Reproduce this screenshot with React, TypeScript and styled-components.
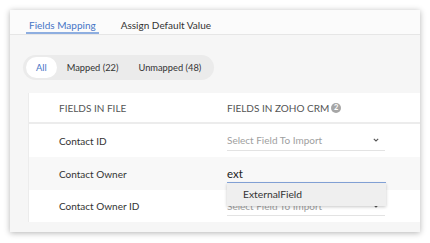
import React from "react";
import styled, { createGlobalStyle } from "styled-components";

const Global = createGlobalStyle`
  html, body { margin: 0; padding: 0; background: #ffffff; }
  body { font-family: Lato, "Open Sans", sans-serif; }
  * { box-sizing: border-box; }
`;

const Page = styled.div`
  width: 430px;
  height: 243px;
  padding: 10px;
  overflow: hidden;
`;

const Card = styled.div`
  width: 410px;
  height: 222px;
  background: #f6f6f6;
  box-shadow: 0 1px 6px rgba(0, 0, 0, 0.3);
  display: flex;
  flex-direction: column;
  overflow: hidden;
`;

const TabBar = styled.div`
  height: 25px;
  flex: none;
  background: #fbfbfb;
  border-bottom: 1px solid #e6e6e6;
  display: flex;
  align-items: stretch;
  padding-left: 16px;
  gap: 19px;
`;

const Tab = styled.div<{ $active?: boolean }>`
  font-size: 10px;
  line-height: 12px;
  color: ${(p) => (p.$active ? "#4675c6" : "#333333")};
  padding: 9px 3px 0 3px;
  border-bottom: 2px solid ${(p) => (p.$active ? "#8eaee0" : "transparent")};
`;

const Body = styled.div`
  flex: 1;
  display: flex;
  flex-direction: column;
  padding: 20px 0 0 13px;
`;

const FilterPill = styled.div`
  align-self: flex-start;
  height: 25px;
  border-radius: 13px;
  background: #ebebeb;
  display: flex;
  align-items: center;
  padding: 0 13px 0 3px;
`;

const FilterItem = styled.div<{ $active?: boolean; $gap?: number }>`
  font-size: 9.3px;
  height: 21px;
  display: flex;
  align-items: center;
  padding: 0 ${(p) => (p.$active ? "10px" : "0")};
  margin-left: ${(p) => p.$gap ?? 0}px;
  border-radius: 11px;
  background: ${(p) => (p.$active ? "#ffffff" : "transparent")};
  color: ${(p) => (p.$active ? "#4675c6" : "#333333")};
`;

const Panel = styled.div`
  margin-top: 13px;
  margin-left: 5px;
  background: #ffffff;
  border-left: 1px solid #ececec;
  display: flex;
  flex-direction: column;
`;

const HeaderRow = styled.div`
  display: grid;
  grid-template-columns: 198px 1fr;
  height: 31px;
  border-bottom: 2px solid #ececec;
  align-items: center;
`;

const HeadCell = styled.div<{ $first?: boolean }>`
  font-size: 10px;
  line-height: 12px;
  color: #555555;
  text-transform: uppercase;
  padding-left: ${(p) => (p.$first ? "30px" : "0")};
  display: flex;
  align-items: center;
  gap: 2px;
`;

const Badge = styled.span`
  width: 10px;
  height: 10px;
  border-radius: 50%;
  background: #a6a6a6;
  color: #ffffff;
  font-size: 7.5px;
  font-weight: 700;
  line-height: 10px;
  display: inline-flex;
  align-items: center;
  justify-content: center;
`;

const Row = styled.div<{ $shade?: boolean; $h?: number }>`
  display: grid;
  grid-template-columns: 198px 1fr;
  height: ${(p) => p.$h ?? 33}px;
  align-items: center;
  background: ${(p) => (p.$shade ? "#f8f8f8" : "#ffffff")};
  position: relative;
`;

const FieldName = styled.div`
  font-size: 10px;
  line-height: 12px;
  color: #333333;
  padding-left: 30px;
`;

const SelectBox = styled.div`
  width: 158px;
  height: 20px;
  border-bottom: 1px solid #e3e3e3;
  display: flex;
  align-items: center;
  justify-content: space-between;
  padding-right: 6px;
  font-size: 10px;
  color: #a0a0a0;
`;

const InputWrap = styled.div`
  position: relative;
  width: 159px;
`;

const InputBox = styled.div`
  height: 18px;
  border-bottom: 1px solid #86a6dc;
  display: flex;
  align-items: center;
  font-size: 11.5px;
  color: #222222;
`;

const Menu = styled.div`
  position: absolute;
  top: 18px;
  left: 0;
  width: 159px;
  height: 23px;
  background: #efefef;
  box-shadow: 0 1px 3px rgba(0, 0, 0, 0.22);
  display: flex;
  align-items: center;
  padding-left: 16px;
  font-size: 10.3px;
  color: #333333;
  z-index: 2;
`;

const Chevron = () => (
  <svg width="6" height="4" viewBox="0 0 6 4">
    <path d="M0.8 0.8 L3 3 L5.2 0.8" fill="none" stroke="#555" strokeWidth="1.1" />
  </svg>
);

export default function App() {
  return (
    <>
      <Global />
      <Page>
        <Card>
          <TabBar>
            <Tab $active>Fields Mapping</Tab>
            <Tab>Assign Default Value</Tab>
          </TabBar>
          <Body>
            <FilterPill>
              <FilterItem $active>All</FilterItem>
              <FilterItem $gap={10}>Mapped (22)</FilterItem>
              <FilterItem $gap={20}>Unmapped (48)</FilterItem>
            </FilterPill>
            <Panel>
              <HeaderRow>
                <HeadCell $first>Fields in file</HeadCell>
                <HeadCell>
                  Fields in Zoho CRM <Badge>2</Badge>
                </HeadCell>
              </HeaderRow>
              <Row>
                <FieldName>Contact ID</FieldName>
                <SelectBox>
                  Select Field To Import
                  <Chevron />
                </SelectBox>
              </Row>
              <Row $shade>
                <FieldName>Contact Owner</FieldName>
                <InputWrap>
                  <InputBox>ext</InputBox>
                  <Menu>ExternalField</Menu>
                </InputWrap>
              </Row>
              <Row $h={32}>
                <FieldName>Contact Owner ID</FieldName>
                <SelectBox>
                  Select Field To Import
                  <Chevron />
                </SelectBox>
              </Row>
            </Panel>
          </Body>
        </Card>
      </Page>
    </>
  );
}
